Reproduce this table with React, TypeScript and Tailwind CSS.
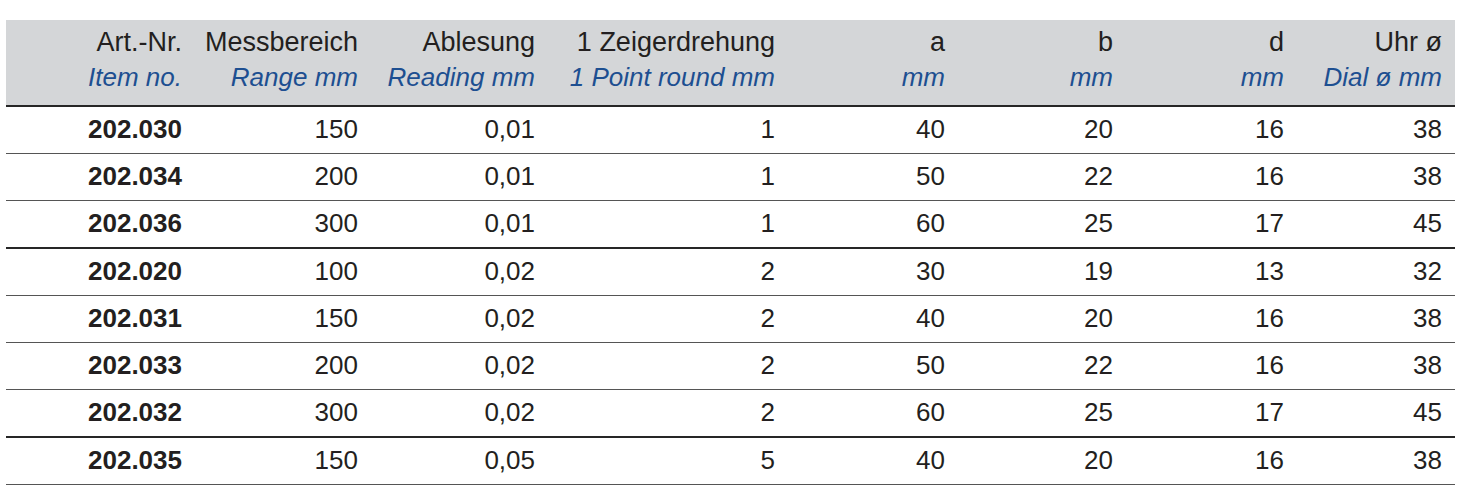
import React from 'react';

interface Row {
  art: string;
  range: string;
  reading: string;
  turn: string;
  a: string;
  b: string;
  d: string;
  dial: string;
}

const rows: Row[] = [
  { art: '202.030', range: '150', reading: '0,01', turn: '1', a: '40', b: '20', d: '16', dial: '38' },
  { art: '202.034', range: '200', reading: '0,01', turn: '1', a: '50', b: '22', d: '16', dial: '38' },
  { art: '202.036', range: '300', reading: '0,01', turn: '1', a: '60', b: '25', d: '17', dial: '45' },
  { art: '202.020', range: '100', reading: '0,02', turn: '2', a: '30', b: '19', d: '13', dial: '32' },
  { art: '202.031', range: '150', reading: '0,02', turn: '2', a: '40', b: '20', d: '16', dial: '38' },
  { art: '202.033', range: '200', reading: '0,02', turn: '2', a: '50', b: '22', d: '16', dial: '38' },
  { art: '202.032', range: '300', reading: '0,02', turn: '2', a: '60', b: '25', d: '17', dial: '45' },
  { art: '202.035', range: '150', reading: '0,05', turn: '5', a: '40', b: '20', d: '16', dial: '38' },
];

// last row of each reading group gets the heavy rule
const groupEnds = [2, 6];

const headers = [
  ['Art.-Nr.', 'Item no.'],
  ['Messbereich', 'Range mm'],
  ['Ablesung', 'Reading mm'],
  ['1 Zeigerdrehung', '1 Point round mm'],
  ['a', 'mm'],
  ['b', 'mm'],
  ['d', 'mm'],
  ['Uhr ø', 'Dial ø mm'],
];

const cols = 'grid grid-cols-[189px_176px_177px_240px_170px_168px_171px_158px]';

export default function App() {
  return (
    <div className="min-h-screen bg-white pt-[20px] pl-[6px] font-['Liberation_Sans',Arial,sans-serif] text-[#231f20]">
      <div className="w-[1449px]">
        <div className={`${cols} bg-[#d4d6d8] pt-[5px] pb-[10px] border-b-2 border-[#262626]`}>
          {headers.map(([de, en]) => (
            <div key={de} className="pr-[13px] text-right whitespace-nowrap">
              <div className="text-[27px] leading-[35px]">{de}</div>
              <div className="text-[26px] leading-[35px] italic text-[#1d4f91]">{en}</div>
            </div>
          ))}
        </div>

        {rows.map((r, i) => {
          const heavy = groupEnds.includes(i);
          const cells = [r.range, r.reading, r.turn, r.a, r.b, r.d, r.dial];
          return (
            <div
              key={r.art}
              className={`${cols} h-[47px] pt-[9px] text-[26px] leading-[26px] ${
                heavy ? 'h-[48px] border-b-2 border-[#262626]' : 'border-b border-[#555]'
              }`}
            >
              <div className="pr-[13px] text-right font-bold">{r.art}</div>
              {cells.map((c, j) => (
                <div key={j} className="pr-[13px] text-right">
                  {c}
                </div>
              ))}
            </div>
          );
        })}
      </div>
    </div>
  );
}
